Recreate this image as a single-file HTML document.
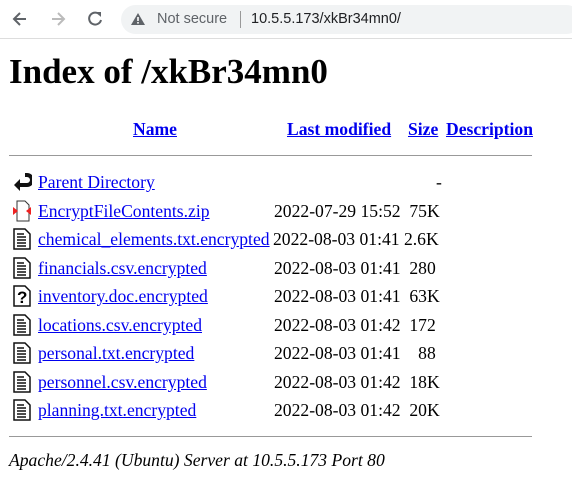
<!DOCTYPE html>
<html><head><style>
body{margin:0;width:572px;height:498px;background:#fff;font-family:"Liberation Serif",serif;position:relative;overflow:hidden}
.bar{position:absolute;left:0;top:0;width:572px;height:38px;background:#fff;border-bottom:1px solid #ddd}
.pill{position:absolute;left:121px;top:5px;width:460px;height:29px;border-radius:15px;background:#f1f3f4}
.t{position:absolute;font-family:"Liberation Sans",sans-serif;font-size:14.5px;top:11px}
.a{position:absolute;white-space:nowrap;font-size:17.6px}
a{color:#00e;text-decoration:underline}
h1{position:absolute;left:9px;top:52px;margin:0;font-size:35px;font-weight:bold}
.hr{position:absolute;left:9px;width:523px;height:1px;background:#999}
.ic{position:absolute;left:12px;width:20px;height:22px}
</style></head><body>
<div class="bar">
<svg style="position:absolute;left:10px;top:9px" width="20" height="20"><path d="M16 10H5M10 4L4 10l6 6" stroke="#5f6368" stroke-width="2" fill="none"/></svg>
<svg style="position:absolute;left:48px;top:9px" width="20" height="20"><path d="M4 10h11M10 4l6 6-6 6" stroke="#bbb" stroke-width="2" fill="none"/></svg>
<svg style="position:absolute;left:85px;top:9px" width="20" height="20"><path d="M15 6A6 6 0 1 0 16 11" stroke="#5f6368" stroke-width="2" fill="none"/><path d="M11 3h5v5z" fill="#5f6368"/></svg>
<div class="pill"></div>
<svg style="position:absolute;left:130px;top:12px" width="16" height="14"><path d="M8 1L15 13H1z" fill="#5f6368"/><rect x="7.2" y="5" width="1.6" height="4" fill="#fff"/><rect x="7.2" y="10" width="1.6" height="1.6" fill="#fff"/></svg>
<div class="t" style="left:157px;color:#5f6368">Not secure</div>
<div style="position:absolute;left:240px;top:11px;width:1px;height:17px;background:#999"></div>
<div class="t" style="left:251px;color:#202124">10.5.5.173/xkBr34mn0/</div>
</div>
<h1>Index of /xkBr34mn0</h1>
<div class="a" style="left:133px;top:119px;font-weight:bold"><a>Name</a></div>
<div class="a" style="left:287px;top:119px;font-weight:bold"><a>Last modified</a></div>
<div class="a" style="left:408px;top:119px;font-weight:bold"><a>Size</a></div>
<div class="a" style="left:446px;top:119px;font-weight:bold"><a>Description</a></div>
<div class="hr" style="top:155px"></div>
<svg class="ic" style="top:171px"><path d="M2 14l6-6v4h7a3 3 0 0 0 0-6h-2V2h2a7 7 0 0 1 0 14H8v4z" fill="#111"/></svg>
<div class="a" style="left:38px;top:172px"><a>Parent Directory</a></div><div class="a" style="left:436px;top:172px">-</div>
<svg class="ic" style="top:200px"><path d="M5 1h8l4 4v16H5z" fill="#fff" stroke="#333"/><path d="M1 7l5 4-5 4zM19 7l-5 4 5 4z" fill="#e22"/></svg>
<div class="a" style="left:38px;top:201px"><a>EncryptFileContents.zip</a></div><div class="a" style="left:274px;top:201px">2022-07-29 15:52&nbsp; 75K</div>
<svg width="0" height="0" style="position:absolute"><defs><g id="d"><path d="M2 1h11l5 5v15H2z" fill="#fff" stroke="#111" stroke-width="1.5"/><path d="M5 6h7M5 9h9M5 12h9M5 15h9M5 18h9" stroke="#111" stroke-width="1.5"/></g></defs></svg>
<svg class="ic" style="top:228px"><use href="#d"/></svg>
<div class="a" style="left:38px;top:229px"><a>chemical_elements.txt.encrypted</a></div><div class="a" style="left:273px;top:229px">2022-08-03 01:41&nbsp;2.6K</div>
<svg class="ic" style="top:257px"><use href="#d"/></svg>
<div class="a" style="left:38px;top:258px"><a>financials.csv.encrypted</a></div><div class="a" style="left:274px;top:258px">2022-08-03 01:41&nbsp; 280</div>
<svg class="ic" style="top:285px"><path d="M2 1h11l5 5v15H2z" fill="#fff" stroke="#111" stroke-width="1.5"/><text x="5" y="18" font-size="17" font-weight="bold" font-family="Liberation Sans">?</text></svg>
<div class="a" style="left:38px;top:286px"><a>inventory.doc.encrypted</a></div><div class="a" style="left:274px;top:286px">2022-08-03 01:41&nbsp; 63K</div>
<svg class="ic" style="top:314px"><use href="#d"/></svg>
<div class="a" style="left:38px;top:315px"><a>locations.csv.encrypted</a></div><div class="a" style="left:274px;top:315px">2022-08-03 01:42&nbsp; 172</div>
<svg class="ic" style="top:342px"><use href="#d"/></svg>
<div class="a" style="left:38px;top:343px"><a>personal.txt.encrypted</a></div><div class="a" style="left:274px;top:343px">2022-08-03 01:41&nbsp;&nbsp;&nbsp; 88</div>
<svg class="ic" style="top:371px"><use href="#d"/></svg>
<div class="a" style="left:38px;top:372px"><a>personnel.csv.encrypted</a></div><div class="a" style="left:274px;top:372px">2022-08-03 01:42&nbsp; 18K</div>
<svg class="ic" style="top:399px"><use href="#d"/></svg>
<div class="a" style="left:38px;top:400px"><a>planning.txt.encrypted</a></div><div class="a" style="left:274px;top:400px">2022-08-03 01:42&nbsp; 20K</div>
<div class="hr" style="top:436px"></div>
<div class="a" style="left:9px;top:450px;font-style:italic">Apache/2.4.41 (Ubuntu) Server at 10.5.5.173 Port 80</div>
</body></html>
